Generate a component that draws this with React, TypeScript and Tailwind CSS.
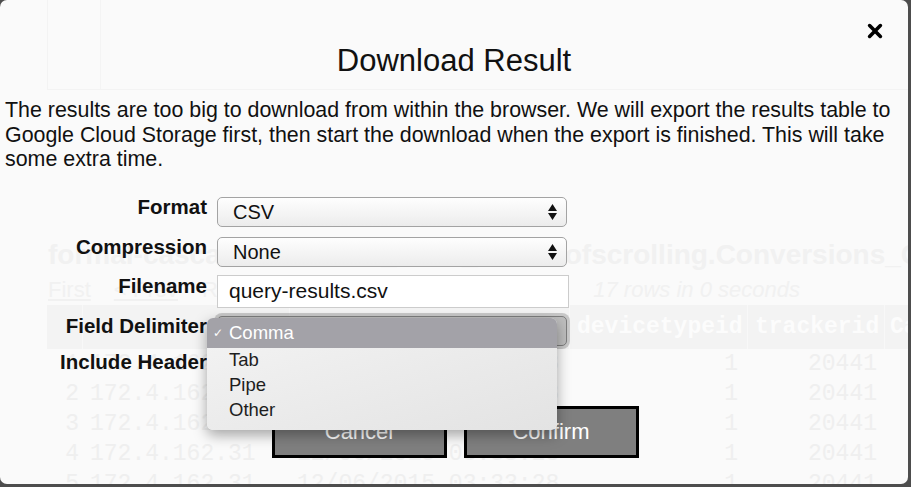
import React from 'react';

type Row = { n: number; ip: string; ts: string; device: string; tracker: string };

const rows: Row[] = [1, 2, 3, 4, 5].map((n) => ({
  n,
  ip: '172.4.162.31',
  ts: '12/06/2015 03:33:28',
  device: '1',
  tracker: '20441',
}));

const delimiterOptions = ['Tab', 'Pipe', 'Other'];

// faded results page sitting behind the dialog
const BackgroundPage = () => (
  <div aria-hidden className="select-none">
    <div className="ml-[47px] h-[90px] w-[861px] border-l border-b border-[#f3f3f3]">
      <div className="h-full w-[53px] border-r border-[#f4f4f4]" />
    </div>
    <h2 className="mt-[149px] pl-[48px] whitespace-nowrap text-[28px] leading-[32px] font-bold text-[#f1f1f1]">
      formal-cascade-371:aaaa_cdoe_imsickofscrolling.Conversions_Clicks
    </h2>
    <div className="mt-[6px] pl-[48px] flex whitespace-nowrap text-[22px] leading-[26px] text-[#f1f1f1]">
      <span className="mr-[23px] underline">First</span>
      <span className="mr-[24px] underline">&lt; Prev</span>
      <span className="mr-[12px]">Rows 1 - 17 of 249,038</span>
      <span className="mr-[16px] underline">Next &gt;</span>
      <span className="underline">Last</span>
      <span className="ml-[30px] italic">17 rows in 0 seconds</span>
    </div>
    <div className="mt-[2px] ml-[47px] font-['Liberation_Mono',monospace] text-[23px] leading-[26px] whitespace-nowrap">
      <div className="flex h-[44px] items-center bg-[#f3f3f3] font-bold text-[#fcfcfc]">
        <div className="h-full w-[36px] shrink-0 border-r border-[#f8f8f8]" />
        <div className="h-full w-[207px] shrink-0 border-r border-[#f8f8f8]" />
        <div className="h-full w-[280px] shrink-0 border-r border-[#f8f8f8]" />
        <div className="flex h-full w-[178px] shrink-0 items-center border-r border-[#f8f8f8] pl-[7px]">devicetypeid</div>
        <div className="flex h-full w-[137px] shrink-0 items-center border-r border-[#f8f8f8] pl-[7px]">trackerid</div>
        <div className="flex h-full min-w-0 flex-1 items-center overflow-hidden pl-[5px]">Campaign</div>
      </div>
      {rows.map((r) => (
        <div key={r.n} className="flex h-[30px] items-center text-[#efefef]">
          <div className="w-[36px] shrink-0 pr-[4px] text-right">{r.n}</div>
          <div className="w-[207px] shrink-0 pl-[7px]">{r.ip}</div>
          <div className="w-[280px] shrink-0 pl-[7px]">{r.ts}</div>
          <div className="w-[178px] shrink-0 pr-[10px] text-right">{r.device}</div>
          <div className="w-[137px] shrink-0 pr-[8px] text-right">{r.tracker}</div>
        </div>
      ))}
    </div>
  </div>
);

const SelectBox = ({ value, focused = false }: { value: string; focused?: boolean }) => (
  <div
    className={`flex h-[30px] w-[350px] items-center rounded-[5px] border pl-[15px] text-[20px] leading-[24px] ${
      focused
        ? 'border-[#7d7d7d] bg-[#bdbdbd] shadow-[0_0_0_3px_rgba(120,120,120,0.35)]'
        : 'border-[#a3a3a3] bg-linear-to-b from-[#fefefe] to-[#ececec]'
    }`}
  >
    {value}
    <svg className="ml-auto mr-[9px]" width="9" height="16" viewBox="0 0 9 16">
      <path d="M4.5 0 L9 7 H0 Z M0 9 H9 L4.5 16 Z" fill="#111" />
    </svg>
  </div>
);

const FormRow = ({
  label,
  rowClass,
  labelClass = 'pb-[10px]',
  children,
}: {
  label: string;
  rowClass: string;
  labelClass?: string;
  children: React.ReactNode;
}) => (
  <div className={`flex items-center ${rowClass}`}>
    <label className={`w-[207px] shrink-0 text-right text-[20.5px] leading-[24px] font-bold ${labelClass}`}>
      {label}
    </label>
    <div className="relative ml-[10px]">{children}</div>
  </div>
);

const DownloadDialog = () => (
  <div className="absolute inset-0 text-[#111]">
    <button aria-label="Close" className="absolute top-[23px] right-[25px] h-4 w-4">
      <svg width="16" height="16" viewBox="0 0 16 16">
        <path d="M2.6 2.6 L13.4 13.4 M13.4 2.6 L2.6 13.4" stroke="#000" strokeWidth="3.6" strokeLinecap="round" />
      </svg>
    </button>

    <h1 className="pt-[43px] text-center text-[31px] leading-[36px]">Download Result</h1>

    <p className="mt-[19px] px-[5px] text-[21.4px] leading-[24.5px]">
      The results are too big to download from within the browser. We will export the results table to
      <br />
      Google Cloud Storage first, then start the download when the export is finished. This will take
      <br />
      some extra time.
    </p>

    <div className="mt-[25px] flex flex-col">
      <FormRow label="Format" rowClass="h-[30px]">
        <SelectBox value="CSV" />
      </FormRow>
      <FormRow label="Compression" rowClass="mt-[10px] h-[30px]">
        <SelectBox value="None" />
      </FormRow>
      <FormRow label="Filename" rowClass="mt-[8px] h-[33px]">
        <input
          readOnly
          value="query-results.csv"
          className="h-[33px] w-[352px] border border-[#cccccc] bg-white pl-[11px] text-[21px] outline-none"
        />
      </FormRow>
      <FormRow label="Field Delimiter" rowClass="mt-[8px] h-[30px]">
        <SelectBox value="Comma" focused />
        <div className="absolute left-[-10px] top-[2px] z-10 h-[112px] w-[350px] overflow-hidden rounded-[6px] bg-linear-to-br from-[#f4f4f4] to-[#e3e3e3] text-[18.5px] leading-[22px] shadow-[0_5px_14px_rgba(0,0,0,0.35)]">
          <div className="flex h-[30px] items-center bg-[#a3a2a8] text-white">
            <span className="w-[22px] pl-[6px] text-[12px] font-['DejaVu_Sans',sans-serif]">✓</span>
            Comma
          </div>
          {delimiterOptions.map((o) => (
            <div key={o} className="flex h-[25px] items-center pl-[22px] text-[#1e1e1e]">
              {o}
            </div>
          ))}
        </div>
      </FormRow>
      <FormRow label="Include Header" rowClass="mt-[6px] h-[24px]" labelClass="pb-[4px]">
        <input type="checkbox" defaultChecked className="h-[14px] w-[14px]" />
      </FormRow>
    </div>

    <div className="mt-[30px] flex justify-center gap-[17px] pl-[2px]">
      <button className="h-[52px] w-[175px] border-[3px] border-black bg-[#7f7f7f] text-[22px] text-white">
        Cancel
      </button>
      <button className="h-[52px] w-[175px] border-[3px] border-black bg-[#7f7f7f] text-[22px] text-white">
        Confirm
      </button>
    </div>
  </div>
);

export default function App() {
  return (
    <div className="h-[487px] w-[911px] overflow-hidden bg-[#4d4d4d] font-['Liberation_Sans',Arial,sans-serif]">
      <div className="relative h-[484px] w-[908px] overflow-hidden rounded-[7px] bg-[#fafafa]">
        <BackgroundPage />
        <DownloadDialog />
      </div>
    </div>
  );
}
